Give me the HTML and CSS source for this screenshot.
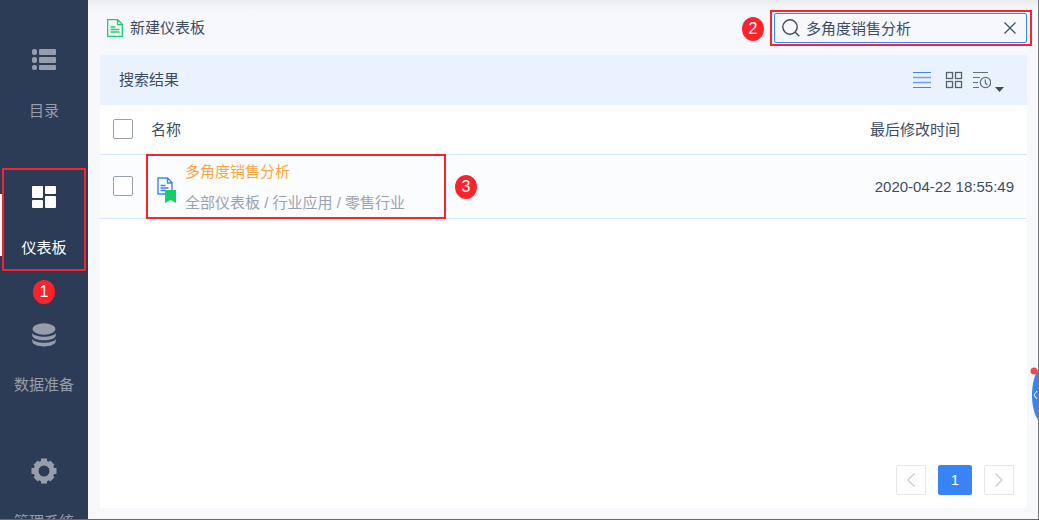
FILE: index.html
```html
<!DOCTYPE html>
<html lang="zh-CN">
<head>
<meta charset="utf-8">
<title>仪表板</title>
<link rel="stylesheet" href="styles.css">
</head>
<body>
<div class="app">
  <nav class="sidebar">
    <a class="nav-item" href="#catalog">
      <svg class="nav-icon" viewBox="0 0 26 26" fill="currentColor"><rect x="1" y="2" width="5" height="6" rx="2"/><rect x="8" y="2" width="17" height="6" rx="1"/><rect x="1" y="10" width="5" height="6" rx="2"/><rect x="8" y="10" width="17" height="6" rx="1"/><rect x="1" y="18" width="5" height="5" rx="2"/><rect x="8" y="18" width="17" height="5" rx="1"/></svg>
      <span>目录</span>
    </a>
    <a class="nav-item active" href="#dashboard">
      <svg class="nav-icon" viewBox="0 0 26 26" fill="currentColor"><rect x="1" y="2" width="11" height="12" rx="1"/><rect x="14" y="2" width="11" height="8" rx="1"/><rect x="1" y="16" width="11" height="8" rx="1"/><rect x="14" y="12" width="11" height="12" rx="1"/></svg>
      <span>仪表板</span>
      <i class="frame frame-nav"></i>
      <b class="badge badge-nav">1</b>
    </a>
    <a class="nav-item" href="#data">
      <svg class="nav-icon" viewBox="0 0 26 26" fill="currentColor"><ellipse cx="13" cy="8" rx="11.500" ry="5.800"/><path d="M1.300 12c2.500 5 20.900 5 23.400 0v2.300c0 6.600-23.400 6.600-23.400 0zM1.300 18c2.500 5 20.900 5 23.400 0v2.300c0 6.800-23.400 6.800-23.400 0z"/></svg>
      <span>数据准备</span>
    </a>
    <a class="nav-item" href="#system">
      <svg class="nav-icon" viewBox="0 0 26 26" fill="none" stroke="currentColor"><circle cx="13" cy="13" r="8" stroke-width="5"/><path stroke-width="6" stroke-linejoin="round" d="M13 .5v4M13 21.500v4M.5 13h4M21.500 13h4M4.600 4.600l3 3M18.400 18.400l3 3M21.400 4.600l-3 3M7.600 18.400l-3 3"/></svg>
      <span>管理系统</span>
    </a>
  </nav>

  <main class="main">
    <header class="topbar">
      <button class="create" type="button">
        <svg class="doc-icon" viewBox="0 0 16 18" fill="none" stroke="#1dce70" stroke-width="1.300"><path d="M.7.700h10l4.600 4.600v12H.7zM10.500.700v5h4.800M3.500 8h5M3.500 10.500h9M3.500 13h9"/></svg>
        <span>新建仪表板</span>
      </button>
      <div class="search">
        <svg class="search-icon" viewBox="0 0 18 18" fill="none" stroke="#3e4c63" stroke-width="1.400"><circle cx="8" cy="8" r="7.200"/><path d="M13 13l4.300 4.300"/></svg>
        <input class="search-input" type="text" aria-label="搜索" value="多角度销售分析">
        <button class="clear" type="button" aria-label="清除"><svg class="clear-icon" viewBox="0 0 12 12" fill="none" stroke="#3e4c63" stroke-width="1.200"><path d="M.5.500l11 11M11.500.500l-11 11"/></svg></button>
        <i class="frame frame-search"></i>
        <b class="badge badge-search">2</b>
      </div>
    </header>

    <section class="panel">
      <div class="panel-head">
        <h2 class="panel-title">搜索结果</h2>
        <div class="views">
          <button class="tool" type="button" aria-label="列表视图"><svg class="tool-icon" viewBox="0 0 18 18" fill="none"><path stroke="#3c86f4" d="M0 1.500h18M0 16.500h18"/><path stroke="#6f9ff5" stroke-width="1.400" d="M0 6.500h18M0 11.500h18"/></svg></button>
          <button class="tool" type="button" aria-label="网格视图"><svg class="tool-icon" viewBox="0 0 18 18" fill="none" stroke="#56606f" stroke-width="1.300"><rect x="1.500" y="1.500" width="6" height="6"/><rect x="10.500" y="1.500" width="6" height="6"/><rect x="1.500" y="10.500" width="6" height="6"/><rect x="10.500" y="10.500" width="6" height="6"/></svg></button>
          <button class="tool sort" type="button" aria-label="排序方式"><svg class="tool-icon" viewBox="0 0 18 18" fill="none" stroke="#5f6f82" stroke-width="1.200"><path d="M0 1.500h15M0 6.500h7M0 11.500h5M0 16.500h6"/><circle cx="12.500" cy="11.500" r="5.200"/><path d="M12.300 8.500v3.500l2 2"/></svg><svg class="caret" viewBox="0 0 9 5" fill="#3e4c63"><path d="M0 0h9L4.500 5z"/></svg></button>
        </div>
      </div>

      <table class="list">
        <thead>
          <tr>
            <th class="col-check"><input class="check" type="checkbox" aria-label="全选"></th>
            <th class="col-name">名称</th>
            <th class="col-time">最后修改时间</th>
          </tr>
        </thead>
        <tbody>
          <tr>
            <td class="col-check"><input class="check" type="checkbox" aria-label="选择 多角度销售分析"></td>
            <td class="col-name">
              <div class="entry">
                <svg class="entry-icon" viewBox="0 0 20 26" fill="none"><path stroke="#3c86f4" stroke-width="1.400" d="M1 1h9.500L15 5.500V17H1zM10.500 1v5H15M3.500 8.500h5M3.500 11h8M3.500 13.500h5"/><path fill="#13cf66" d="M8 13h11v13l-5.500-3L8 26z"/></svg>
                <div class="entry-text">
                  <a class="entry-title" href="#result">多角度销售分析</a>
                  <span class="entry-path">全部仪表板 / 行业应用 / 零售行业</span>
                </div>
                <i class="frame frame-entry"></i>
                <b class="badge badge-entry">3</b>
              </div>
            </td>
            <td class="col-time time">2020-04-22 18:55:49</td>
          </tr>
        </tbody>
      </table>

      <div class="pager">
        <button class="page" type="button" aria-label="上一页"><svg class="arrow" viewBox="0 0 8 14" fill="none" stroke="#cbd0d8" stroke-width="1.500"><path d="M7.500.500L1 7l6.500 6.500"/></svg></button>
        <button class="page current" type="button">1</button>
        <button class="page" type="button" aria-label="下一页"><svg class="arrow" viewBox="0 0 8 14" fill="none" stroke="#cbd0d8" stroke-width="1.500"><path d="M.5.500L7 7 .5 13.500"/></svg></button>
      </div>
    </section>
  </main>

  <button class="drawer" type="button" aria-label="展开">
    <svg class="drawer-icon" viewBox="0 0 8 56"><path fill="#3884f4" d="M8 4C0 16 0 42 8 54z"/><path fill="none" stroke="#fff" d="M7 25l-3 4 3 4"/><circle cx="4" cy="5" r="3.500" fill="#ee4b4f"/></svg>
  </button>
</div>
</body>
</html>
```
FILE: styles.css
```css
* {
  box-sizing: border-box;
}

body {
  margin: 0;
  font: 15px/20px "Liberation Sans", "Noto Sans CJK SC", sans-serif;
  color: #3e4c63;
}

button,
input {
  margin: 0;
  padding: 0;
  border: 0;
  background: none;
  font: inherit;
  color: inherit;
}

a {
  color: inherit;
  text-decoration: none;
}

svg {
  display: block;
  flex: none;
}

.app {
  position: relative;
  display: flex;
  height: 100vh;
  overflow: hidden;
  background: #f6f8fb;
  border-right: 1px solid #77797d;
  border-bottom: 1px solid #6b6769;
}

.sidebar {
  flex: none;
  width: 88px;
  padding-top: 17px;
  background: #2c3c57;
  color: #969eac;
}

.nav-item {
  position: relative;
  display: flex;
  flex-direction: column;
  align-items: center;
  gap: 28px;
  height: 137px;
  padding-top: 30px;
  white-space: nowrap;
}

.nav-item.active {
  color: #fff;
}

.nav-item.active::before {
  content: "";
  position: absolute;
  left: 0;
  top: 40px;
  width: 2px;
  height: 62px;
  background: #fff;
}

.nav-icon {
  width: 26px;
  height: 26px;
}

.main {
  flex: 1;
  display: flex;
  flex-direction: column;
  min-width: 0;
  padding: 0 11px 11px 12px;
  background: linear-gradient(#eceef3, #f6f8fb 12px);
}

.topbar {
  display: flex;
  align-items: center;
  justify-content: space-between;
  height: 55px;
  padding-left: 7px;
}

.create {
  display: flex;
  align-items: center;
  gap: 7px;
}

.doc-icon {
  width: 16px;
  height: 18px;
}

.search {
  position: relative;
  display: flex;
  align-items: center;
  gap: 6px;
  width: 253px;
  height: 30px;
  padding: 0 10px 0 7px;
  background: #f6f8fb;
  border: 1px solid #3c86f4;
  border-radius: 2px;
}

.search-icon {
  width: 18px;
  height: 18px;
}

.search-input {
  flex: 1;
  min-width: 0;
  height: 24px;
  outline: 0;
}

.clear-icon {
  width: 12px;
  height: 12px;
}

.panel {
  flex: 1;
  display: flex;
  flex-direction: column;
  background: #fff;
}

.panel-head {
  display: flex;
  align-items: center;
  justify-content: space-between;
  height: 50px;
  padding: 0 23px 0 19px;
  background: #eaf2fe;
}

.panel-title {
  margin: 0;
  font-size: 15px;
  font-weight: 400;
}

.views {
  display: flex;
  gap: 14px;
}

.tool {
  display: flex;
}

.tool-icon {
  width: 18px;
  height: 18px;
}

.sort {
  gap: 4px;
  align-items: flex-end;
  margin-left: -4px;
}

.caret {
  width: 9px;
  height: 5px;
  margin-bottom: -3px;
}

.list {
  width: 100%;
  table-layout: fixed;
  border-collapse: separate;
  border-spacing: 0;
}

.list th,
.list td {
  height: 50px;
  padding: 0;
  border-bottom: 1px solid #d5e5fb;
  font-weight: 400;
  text-align: left;
}

.list td {
  height: 64px;
  background: #fbfcfe;
}

.list .col-check {
  width: 51px;
  padding: 0 0 2px 13px;
}

.list .col-time {
  width: 157px;
}

.list .time {
  padding-right: 13px;
  text-align: right;
}

.check {
  display: block;
  width: 20px;
  height: 20px;
  appearance: none;
  background: #fff;
  border: 1px solid #98a0ad;
  border-radius: 2px;
}

.entry {
  position: relative;
  display: flex;
  align-items: center;
  gap: 8px;
  height: 63px;
  padding-left: 6px;
}

.entry-icon {
  width: 20px;
  height: 26px;
  margin-top: 6px;
}

.entry-text {
  display: flex;
  flex-direction: column;
  gap: 11px;
  padding-top: 1px;
}

.entry-title {
  color: #faa640;
}

.entry-path {
  color: #9aa2af;
}

.pager {
  display: flex;
  gap: 12px;
  justify-content: flex-end;
  margin-top: auto;
  padding: 13px;
}

.page {
  display: flex;
  align-items: center;
  justify-content: center;
  width: 30px;
  height: 30px;
  border: 1px solid #e6e8ec;
  border-radius: 2px;
}

.page.current {
  width: 34px;
  background: #3884f4;
  border-color: #3884f4;
  color: #fff;
}

.arrow {
  width: 8px;
  height: 14px;
}

/* Numbered callouts laid over the interface */
.frame {
  position: absolute;
  border: 2px solid #f8232d;
  pointer-events: none;
}

.badge {
  position: absolute;
  width: 22px;
  height: 24px;
  border-radius: 50%;
  background: #fd232b;
  color: #fff;
  font-size: 16px;
  font-weight: 400;
  line-height: 24px;
  text-align: center;
}

.frame-nav {
  inset: 14px 2px 20px;
}

.badge-nav {
  left: 33px;
  top: 126px;
  z-index: 1;
}

.frame-search {
  inset: -4px -6px -4px -5px;
}

.badge-search {
  right: 262px;
  top: 3px;
}

.frame-entry {
  left: -5px;
  top: -1px;
  width: 300px;
  height: 65px;
}

.badge-entry {
  left: 304px;
  top: 20px;
}

.drawer {
  position: absolute;
  right: 0;
  top: 366px;
}

.drawer-icon {
  width: 8px;
  height: 56px;
}
```
